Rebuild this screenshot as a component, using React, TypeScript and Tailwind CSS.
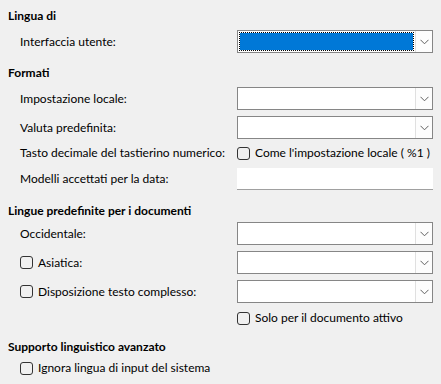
import React from "react";

const Chevron = () => (
  <svg width="9" height="6" viewBox="0 0 9 6" className="block">
    <path d="M0.5 0.8 L4.5 4.8 L8.5 0.8" fill="none" stroke="#606060" strokeWidth="1" />
  </svg>
);

const Combo = ({ focused = false }: { focused?: boolean }) => (
  <div className="flex h-[23px] w-[196px] shrink-0 border border-[#868686] bg-white">
    {focused ? (
      <div className="flex-1 bg-white p-px">
        <div className="h-full w-full border border-dotted border-black bg-[#0078d7] bg-clip-padding" />
      </div>
    ) : (
      <div className="flex-1" />
    )}
    <div className="flex w-[17px] items-center justify-center border-l border-[#e0e0e0] bg-[#fdfdfd]">
      <Chevron />
    </div>
  </div>
);

const Check = () => (
  <span className="inline-block h-[13px] w-[13px] shrink-0 rounded-[3px] border border-[#333333] bg-[#f0f0f0]" />
);

const Heading = ({ children, mt }: { children: React.ReactNode; mt: string }) => (
  <div className={`flex h-5 items-center whitespace-nowrap font-bold ${mt}`}>{children}</div>
);

const Row = ({ label, mt, children }: { label: React.ReactNode; mt: string; children: React.ReactNode }) => (
  <div className={`flex items-center whitespace-nowrap ${mt}`}>
    <div className="flex w-[229px] shrink-0 items-center pl-3">{label}</div>
    {children}
  </div>
);

export default function App() {
  return (
    <div
      className="h-[384px] w-[441px] overflow-hidden bg-[#f0f0f0] pl-2 pt-[6px] text-[12px] leading-[16px] text-black"
      style={{ fontFamily: 'Lato, "Noto Sans", sans-serif' }}
    >
      <Heading mt="mt-0">Lingua di</Heading>
      <Row label="Interfaccia utente:" mt="mt-[4px]">
        <Combo focused />
      </Row>

      <Heading mt="mt-[10px]">Formati</Heading>
      <Row label="Impostazione locale:" mt="mt-[4px]">
        <Combo />
      </Row>
      <Row label="Valuta predefinita:" mt="mt-[6px]">
        <Combo />
      </Row>
      <Row label="Tasto decimale del tastierino numerico:" mt="mt-[4px]">
        <div className="flex h-5 items-center gap-[5px]">
          <Check />
          <span>Come l'impostazione locale ( %1 )</span>
        </div>
      </Row>
      <Row label="Modelli accettati per la data:" mt="mt-[5px]">
        <div className="h-[22px] w-[196px] border-b border-[#a0a0a0] bg-white" />
      </Row>

      <Heading mt="mt-[11px]">Lingue predefinite per i documenti</Heading>
      <Row label="Occidentale:" mt="mt-px">
        <Combo />
      </Row>
      <Row
        label={
          <span className="flex items-center gap-[5px]">
            <Check />
            Asiatica:
          </span>
        }
        mt="mt-[6px]"
      >
        <Combo />
      </Row>
      <Row
        label={
          <span className="flex items-center gap-[5px]">
            <Check />
            Disposizione testo complesso:
          </span>
        }
        mt="mt-[6px]"
      >
        <Combo />
      </Row>
      <div className="mt-[5px] flex h-5 items-center gap-[5px] whitespace-nowrap pl-[229px]">
        <Check />
        <span>Solo per il documento attivo</span>
      </div>

      <Heading mt="mt-[9px]">Supporto linguistico avanzato</Heading>
      <div className="mt-px flex h-5 items-center gap-[5px] whitespace-nowrap pl-3">
        <Check />
        <span>Ignora lingua di input del sistema</span>
      </div>
    </div>
  );
}
